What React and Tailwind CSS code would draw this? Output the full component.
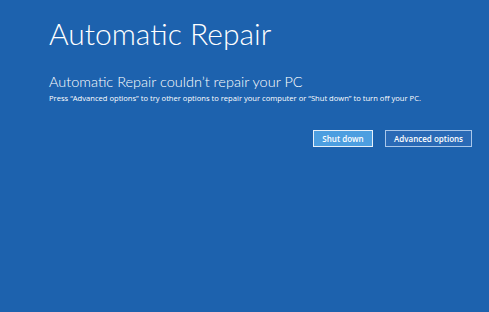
import React from "react";

const App = () => {
  return (
    <div
      className="w-[489px] h-[312px] bg-[#1d62ae] text-white overflow-hidden"
      style={{ fontFamily: '"Open Sans", "Noto Sans", sans-serif' }}
    >
      <div className="pl-[49px] pt-[13px]">
        <h1 className="text-[30px] font-light leading-[40px] font-['Lato',sans-serif]">Automatic Repair</h1>
        <h2 className="mt-[19px] text-[14.5px] font-light leading-[20px] font-['Lato',sans-serif]">
          Automatic Repair couldn’t repair your PC
        </h2>
        <p className="text-[7.6px] leading-[12px]">
          Press “Advanced options” to try other options to repair your computer or “Shut down” to turn off your PC.
        </p>
      </div>
      <div className="flex justify-end gap-[12px] pr-[17px] mt-[26px]">
        <button className="h-[17px] w-[60px] bg-[#4c9ee0] border border-[#e6f0fa] text-[8px] font-semibold leading-none">
          Shut down
        </button>
        <button className="h-[17px] w-[87px] bg-[#2a6ab6] border border-[#a9c7ea] text-[8px] font-semibold leading-none">
          Advanced options
        </button>
      </div>
    </div>
  );
};

export default App;
